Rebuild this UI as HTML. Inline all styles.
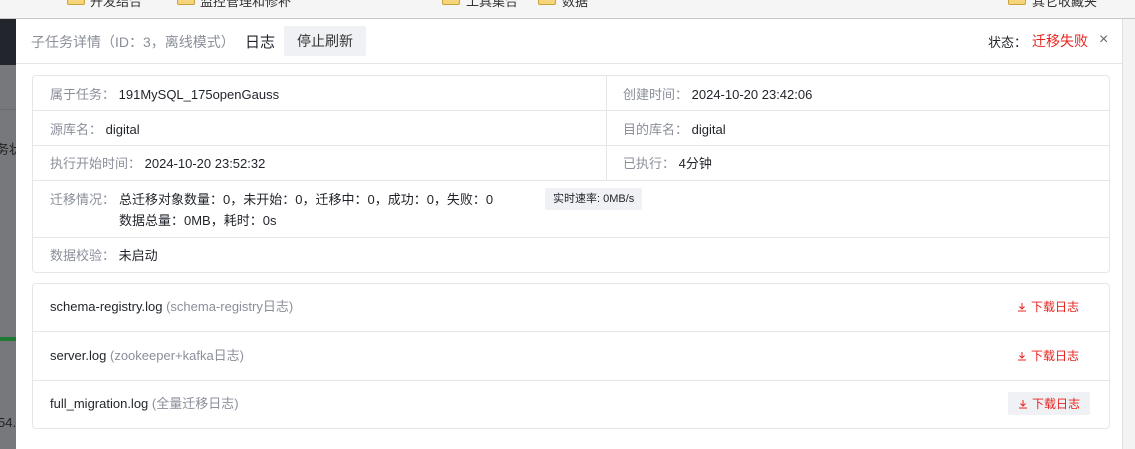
<!DOCTYPE html><html><head><meta charset="utf-8"><style>
*{margin:0;padding:0;box-sizing:border-box}
body{width:1135px;height:449px;overflow:hidden;position:relative;background:#fff;font-family:"Liberation Sans","Noto Sans CJK SC",sans-serif;font-size:13px;color:#1f2329}
.abs{position:absolute}
.top{left:0;top:0;width:1135px;height:19px;background:#f5f5f5;border-bottom:1px solid #c8c8c8;overflow:hidden}
.fold{position:absolute;top:-6px;width:18px;height:11px;background:#f6d57a;border:1px solid #c9a13a;border-radius:2px}
.bt{position:absolute;top:-9px;font-size:13px;color:#333}
.left{left:0;top:19px;width:16px;height:430px;background:#76787c;overflow:hidden}
.right{left:1122px;top:19px;width:13px;height:430px;background:#f3f3f3;border-left:1px solid #e0e0e0}
.card{left:32px;width:1078px;border:1px solid #e4e6ea;border-radius:4px}
.row{position:absolute;left:0;width:100%;border-top:1px solid #e4e6ea}
.lb{color:#8a8f99}
.t{position:absolute;white-space:nowrap}
.dl{position:absolute;right:30px;color:#e6231e;font-size:12px;white-space:nowrap}
.dl svg{vertical-align:-1px;margin-right:4px}
</style></head><body>
<div class="abs top">
<div class="fold" style="left:67px"></div><div class="bt" style="left:90px">开发结合</div>
<div class="fold" style="left:177px"></div><div class="bt" style="left:200px">监控管理和修补</div>
<div class="fold" style="left:442px"></div><div class="bt" style="left:466px">工具集合</div>
<div class="fold" style="left:538px"></div><div class="bt" style="left:562px">数据</div>
<div class="fold" style="left:1008px"></div><div class="bt" style="left:1032px">其它收藏夹</div>
</div>
<div class="abs left">
<div style="height:46px;background:#22252b"></div>
<div style="position:absolute;top:90px;left:0;width:16px;border-top:1px solid #6a6c70"></div>
<div style="position:absolute;top:120px;left:-4px;font-size:13px;color:#222;white-space:nowrap">务状</div>
<div style="position:absolute;top:318px;left:0;width:16px;height:4px;background:#1e7a34"></div>
<div style="position:absolute;top:396px;left:-2px;font-size:13px;color:#222;white-space:nowrap">54.</div>
</div>
<div class="abs right"></div>
<div class="abs" style="left:16px;top:19px;width:1106px;height:45px;border-bottom:1px solid #e4e6ea">
<span class="t" style="left:15px;top:13px;color:#8a8f99;font-size:14px">子任务详情（ID：3，离线模式）</span>
<span class="t" style="left:229px;top:12px;font-size:15px">日志</span>
<span class="t" style="left:268px;top:7px;width:82px;height:30px;background:#f0f1f4;border-radius:2px;text-align:center;line-height:30px;font-size:14px;color:#333">停止刷新</span>
<span class="t" style="left:972px;top:13px;font-size:13px">状态：</span>
<span class="t" style="left:1016px;top:12px;font-size:14px;color:#e6231e">迁移失败</span>
<span class="t" style="left:1083px;top:12px;font-size:16px;color:#666">×</span>
</div>
<div class="abs card" style="top:75px;height:198px">
<div style="position:absolute;left:573px;top:0;height:105px;border-left:1px solid #e4e6ea"></div>
<span class="t" style="left:17px;top:8px"><span class="lb">属于任务：</span> 191MySQL_175openGauss</span>
<span class="t" style="left:590px;top:8px"><span class="lb">创建时间：</span> 2024-10-20 23:42:06</span>
<div class="row" style="top:34px"></div>
<span class="t" style="left:17px;top:43px"><span class="lb">源库名：</span> digital</span>
<span class="t" style="left:590px;top:43px"><span class="lb">目的库名：</span> digital</span>
<div class="row" style="top:69px"></div>
<span class="t" style="left:17px;top:77px"><span class="lb">执行开始时间：</span> 2024-10-20 23:52:32</span>
<span class="t" style="left:590px;top:77px"><span class="lb">已执行：</span> 4分钟</span>
<div class="row" style="top:104px"></div>
<span class="t lb" style="left:17px;top:113px">迁移情况：</span>
<span class="t" style="left:86px;top:113px">总迁移对象数量：0，未开始：0，迁移中：0，成功：0，失败：0</span>
<span class="t" style="left:86px;top:134px">数据总量：0MB，耗时：0s</span>
<span class="t" style="left:512px;top:112px;height:22px;line-height:22px;padding:0 8px;background:#f0f1f4;border-radius:2px;font-size:11px">实时速率: 0MB/s</span>
<div class="row" style="top:161px"></div>
<span class="t" style="left:17px;top:169px"><span class="lb">数据校验：</span> 未启动</span>
</div>
<div class="abs card" style="top:283px;height:146px">
<span class="t" style="left:17px;top:12px">schema-registry.log <span class="lb">(schema-registry日志)</span></span>
<span class="dl" style="top:14px"><svg width="10" height="10" viewBox="0 0 10 10"><path d="M5 1v6M2.5 4.5L5 7l2.5-2.5M1 9h8" stroke="#e6231e" fill="none" stroke-width="1"/></svg>下载日志</span>
<div class="row" style="top:47px"></div>
<span class="t" style="left:17px;top:61px">server.log <span class="lb">(zookeeper+kafka日志)</span></span>
<span class="dl" style="top:63px"><svg width="10" height="10" viewBox="0 0 10 10"><path d="M5 1v6M2.5 4.5L5 7l2.5-2.5M1 9h8" stroke="#e6231e" fill="none" stroke-width="1"/></svg>下载日志</span>
<div class="row" style="top:96px"></div>
<span class="t" style="left:17px;top:109px">full_migration.log <span class="lb">(全量迁移日志)</span></span>
<span class="dl" style="top:108px;right:19px;background:#f0f1f4;padding:3px 10px;border-radius:2px"><svg width="10" height="10" viewBox="0 0 10 10"><path d="M5 1v6M2.5 4.5L5 7l2.5-2.5M1 9h8" stroke="#e6231e" fill="none" stroke-width="1"/></svg>下载日志</span>
</div>
</body></html>
